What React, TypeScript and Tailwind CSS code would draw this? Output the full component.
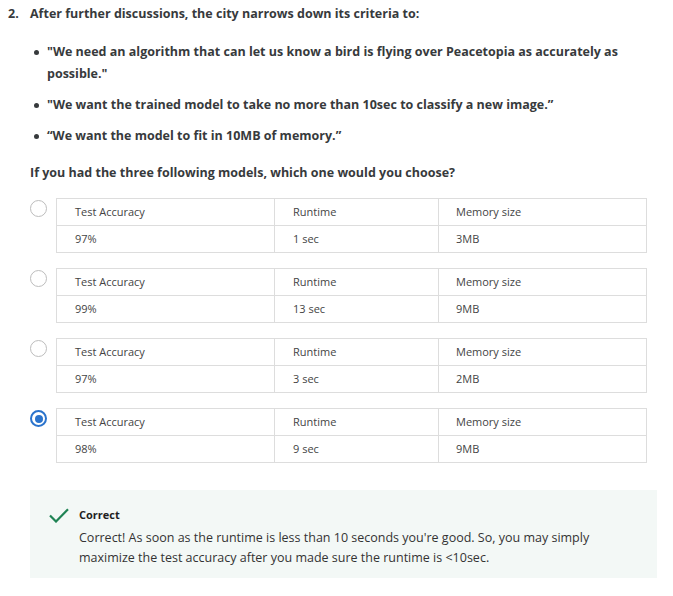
import React from "react";

const rows = [
  { acc: "97%", rt: "1 sec", mem: "3MB", sel: false },
  { acc: "99%", rt: "13 sec", mem: "9MB", sel: false },
  { acc: "97%", rt: "3 sec", mem: "2MB", sel: false },
  { acc: "98%", rt: "9 sec", mem: "9MB", sel: true },
];

function Radio({ sel }: { sel: boolean }) {
  if (sel) {
    return (
      <div className="w-[17px] h-[17px] rounded-full border-2 border-[#2a73cc] flex items-center justify-center shrink-0 mt-[2px]">
        <div className="w-[8px] h-[8px] rounded-full bg-[#2a73cc]" />
      </div>
    );
  }
  return <div className="w-[17px] h-[17px] rounded-full border-[1.5px] border-[#bdbdbd] shrink-0 mt-[2px]" />;
}

function Bullet({ children }: { children: React.ReactNode }) {
  return (
    <li className="flex">
      <span className="w-[17px] shrink-0 flex justify-start pl-[4px] pt-[9px]">
        <span className="block w-[5px] h-[5px] rounded-full bg-[#373a3c]" />
      </span>
      <span>{children}</span>
    </li>
  );
}

export default function App() {
  return (
    <div className="bg-white w-[673px] h-[596px] pt-[3px] text-[#373a3c]" style={{ fontFamily: '"Open Sans", sans-serif' }}>
      <div className="flex pl-[8px]">
        <div className="w-[22px] shrink-0 font-bold text-[12.5px] leading-[22px]">2.</div>
        <div className="flex-1 pr-[16px]">
          <p className="font-bold text-[12.5px] leading-[22px]">After further discussions, the city narrows down its criteria to:</p>
          <ul className="mt-[16px] font-bold text-[12.5px] leading-[22px] flex flex-col gap-[9px] pr-[6px]">
            <Bullet>"We need an algorithm that can let us know a bird is flying over Peacetopia as accurately as possible."</Bullet>
            <Bullet>"We want the trained model to take no more than 10sec to classify a new image.”</Bullet>
            <Bullet>“We want the model to fit in 10MB of memory.”</Bullet>
          </ul>
          <p className="mt-[15px] font-bold text-[12.5px] leading-[22px]">If you had the three following models, which one would you choose?</p>
          <div className="mt-[14px] flex flex-col gap-[15px]">
            {rows.map((r, i) => (
              <div key={i} className="flex gap-[9px]">
                <Radio sel={r.sel} />
                <table className="w-[590px] border-collapse text-[11px] text-[#444] table-fixed">
                  <colgroup>
                    <col className="w-[218px]" />
                    <col className="w-[164px]" />
                    <col className="w-[208px]" />
                  </colgroup>
                  <tbody>
                    <tr className="h-[27px]">
                      <td className="border border-[#ddd] pl-[18px]">Test Accuracy</td>
                      <td className="border border-[#ddd] pl-[18px]">Runtime</td>
                      <td className="border border-[#ddd] pl-[17px]">Memory size</td>
                    </tr>
                    <tr className="h-[27px]">
                      <td className="border border-[#ddd] pl-[18px]">{r.acc}</td>
                      <td className="border border-[#ddd] pl-[18px]">{r.rt}</td>
                      <td className="border border-[#ddd] pl-[17px]">{r.mem}</td>
                    </tr>
                  </tbody>
                </table>
              </div>
            ))}
          </div>
          <div className="mt-[27px] w-[627px] bg-[#f3f8f6] pt-[15px] pb-[10px] pl-[19px] pr-[20px] flex">
            <div className="w-[30px] shrink-0 pt-[3px]">
              <svg width="20" height="15" viewBox="0 0 20 15" fill="none">
                <path d="M1 7.5 L7 13.5 L19 1.2" stroke="#1f8354" strokeWidth="2.2" />
              </svg>
            </div>
            <div>
              <div className="font-bold text-[11px] leading-[20px] text-[#1f1f1f]">Correct</div>
              <div className="text-[12.5px] leading-[20px] mt-[3px] text-[#333]">
                Correct! As soon as the runtime is less than 10 seconds you're good. So, you may simply maximize the test accuracy after you made sure the runtime is &lt;10sec.
              </div>
            </div>
          </div>
        </div>
      </div>
    </div>
  );
}
